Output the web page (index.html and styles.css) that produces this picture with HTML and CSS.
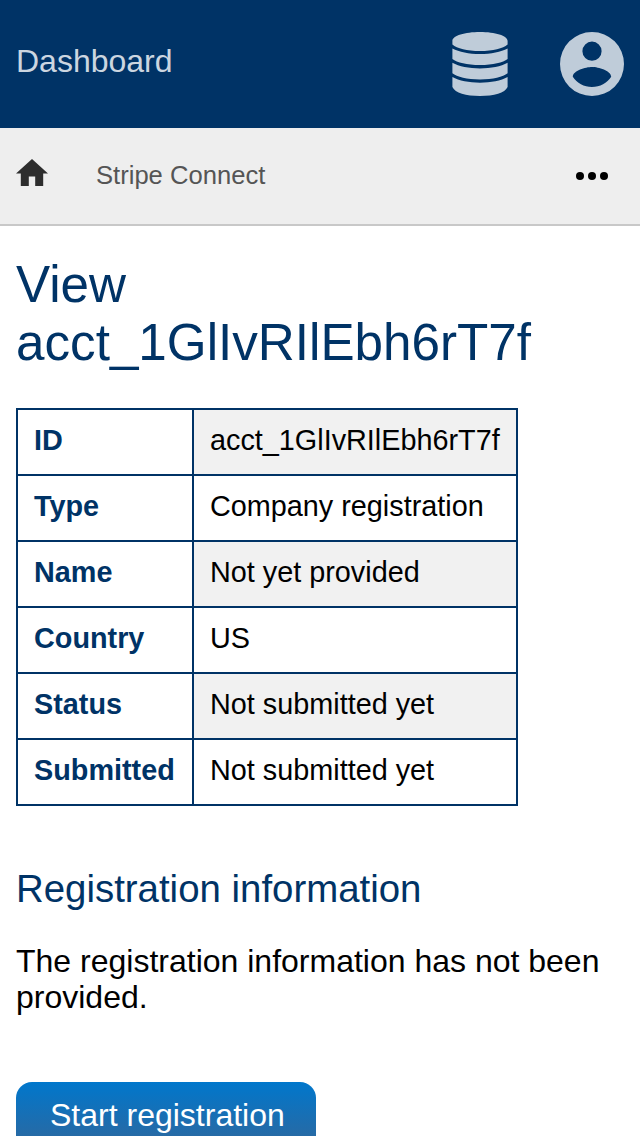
FILE: index.html
```html
<!DOCTYPE html>
<html lang="en">
<head>
<meta charset="utf-8">
<title>Stripe Connect</title>
<link rel="stylesheet" href="styles.css">
</head>
<body>
<header class="header">
  <a class="brand">Dashboard</a>
  <div class="menus">
    <svg class="database" viewBox="0 0 56 64"><path d="M.4 9C.4 3.500 13 0 28 0s27.600 3.500 27.600 9v3.500C51 16.500 41 19 28 19S5 16.500 .4 12.500zM.4 16.500C7 20 17 22 28 22s21-2 27.600-5.500v10.500C51 30.500 41 33 28 33S5 30.500 .4 27zM.4 30.700C7 34.400 17 36.400 28 36.400s21-2 27.600-5.700v10.600C51 45 41 47.400 28 47.400S5 45 .4 41.300zM.4 45C7 48.700 17 50.700 28 50.700s21-2 27.600-5.700V55C53 61 42 64 28 64S3 61 .4 55z"/></svg>
    <svg class="account" viewBox="2 2 20 20"><path fill-rule="evenodd" d="M12 2a10 10 0 1 0 0 20 10 10 0 0 0 0-20zm0 3a3 3 0 1 1 0 6 3 3 0 0 1 0-6zm0 14.200c-2.500 0-4.710-1.280-6-3.220.030-1.990 4-3.080 6-3.080 1.990 0 5.970 1.090 6 3.080-1.290 1.940-3.500 3.220-6 3.220z"/></svg>
  </div>
</header>
<nav class="navbar">
  <svg class="home" viewBox="2 3 20 17"><path d="M10 20v-6h4v6h5v-8h3L12 3 2 12h3v8z"/></svg>
  <a class="crumb">Stripe Connect</a>
  <svg class="more" viewBox="0 0 32 8"><circle cx="4" cy="4" r="4"/><circle cx="16" cy="4" r="4"/><circle cx="28" cy="4" r="4"/></svg>
</nav>
<main class="content">
  <h1 class="title">View acct_1GlIvRIlEbh6rT7f</h1>
  <table class="details">
    <tr><th>ID</th><td>acct_1GlIvRIlEbh6rT7f</td></tr>
    <tr><th>Type</th><td>Company registration</td></tr>
    <tr><th>Name</th><td>Not yet provided</td></tr>
    <tr><th>Country</th><td>US</td></tr>
    <tr><th>Status</th><td>Not submitted yet</td></tr>
    <tr><th>Submitted</th><td>Not submitted yet</td></tr>
  </table>
  <h2 class="subtitle">Registration information</h2>
  <p class="note">The registration information has not been provided.</p>
  <a class="button">Start registration</a>
</main>
</body>
</html>
```
FILE: styles.css
```css
* { box-sizing: border-box; }
html, body { margin: 0; height: 1136px; overflow: hidden; }
body { background: #fff; color: #000; font: 32px/36px "Liberation Sans", Arial, sans-serif; }
.header { display: flex; justify-content: space-between; height: 128px; padding: 32px 16px; background: #003366; }
.brand { padding-top: 11px; color: #ccd6e0; }
.menus { display: flex; gap: 52px; fill: #bfccd9; }
.database { width: 56px; height: 64px; }
.account { width: 64px; height: 64px; }
.navbar { display: flex; height: 98px; padding: 0 32px 0 16px; background: #eee; border-bottom: 2px solid #c8c8c8; }
.home { width: 32px; height: 27.2px; margin-top: 30.6px; fill: #2d2d2d; }
.crumb { margin: 29px auto 0 48px; color: #555; font-size: 25.6px; }
.more { width: 32px; height: 8px; margin-top: 44px; }
.content { padding: 30px 16px 0; }
.title { width: 560px; margin: 0 0 36px; color: #003366; font-size: 51.2px; line-height: 58px; font-weight: 400; }
.details { width: 502px; border-collapse: collapse; font-size: 28.8px; line-height: 32px; }
.details th, .details td { height: 66px; padding: 14px 16px 18px; border: 2px solid #003366; text-align: left; vertical-align: top; }
.details th { width: 176px; color: #003366; font-weight: 700; }
.details tr:nth-child(odd) td { background: #f1f1f1; }
.subtitle { margin: 61px 0 32px; color: #003366; font-size: 38.4px; line-height: 44px; font-weight: 400; }
.note { margin: 0 0 67px; }
.button { display: block; width: 300px; height: 72px; padding: 15px 0 0 34px; border-radius: 16px; background: linear-gradient(#0077cc, #336699); color: #fff; white-space: nowrap; }
```
